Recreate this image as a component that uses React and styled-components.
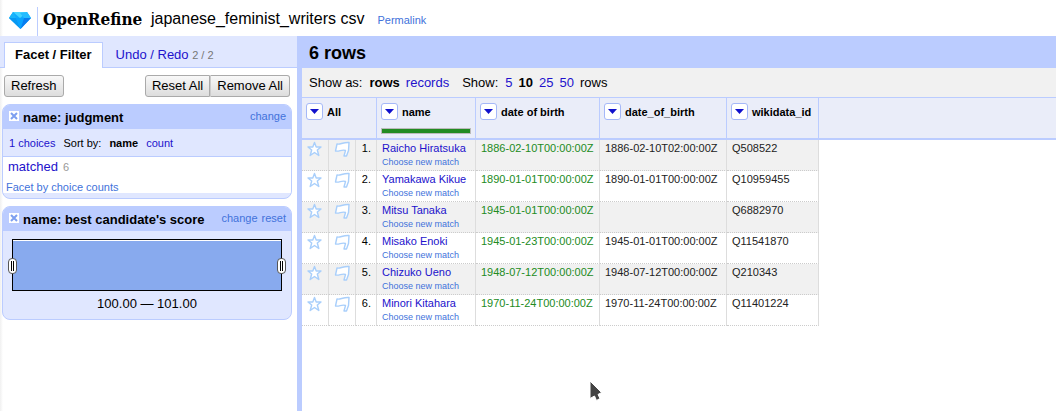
import React, { useState } from "react";
import styled, { createGlobalStyle, css } from "styled-components";

const c = {
  link: "#2211cc",
  action: "#4272db",
  band: "#bbccff",
  soft: "#e0e7ff",
  head: "#eaedf9",
  grey: "#f1f1f1",
  line: "#dddddd",
};

const Global = createGlobalStyle`
  *, *::before, *::after { box-sizing: border-box; }
  body { margin: 0; background: #fff; color: #000; font: 13px/16px "Liberation Sans", Arial, sans-serif; }
`;

const Page = styled.div`
  display: flex;
  flex-direction: column;
  min-height: 100vh;
  position: relative;
  background: linear-gradient(to right, #f0f0f0, #fff 3px);
`;

const Header = styled.header`
  display: flex;
  align-items: center;
  height: 36px;
  padding-left: 8px;
`;

const Logo = styled.a`
  display: flex;
  align-items: center;
  color: #000;
  text-decoration: none;
  svg { display: block; margin-top: 5px; }
`;

const Wordmark = styled.span`
  margin: 6px 6px 0 5px;
  padding-left: 5px;
  border-left: 1px solid #bbccff;
  height: 29px;
  width: 108px;
  white-space: nowrap;
  font: bold 17px/25px "DejaVu Serif Condensed", "DejaVu Serif", serif;
`;

const Project = styled.h1`
  margin: 2px 13px 0 0;
  font-size: 16px;
  line-height: 20px;
  font-weight: normal;
`;

const Link = styled.a`
  color: ${(p) => (p.$action ? c.action : c.link)};
  font-size: ${(p) => p.$size || 13}px;
  text-decoration: none;
`;

const Permalink = styled(Link)`
  margin-top: 4px;
`;

const Main = styled.div`
  display: flex;
  flex: 1;
`;

const Sidebar = styled.aside`
  flex: 0 0 297px;
`;

const Tabs = styled.nav`
  display: flex;
  align-items: flex-end;
  height: 32px;
  padding-left: 4px;
  background: ${c.soft};
  box-shadow: inset 0 -1px ${c.band};
`;

const Tab = styled.a`
  height: 26px;
  padding: 4px 10px 0;
  border: 1px solid transparent;
  border-bottom: 0;
  color: ${c.link};
  text-decoration: none;
  ${(p) =>
    p.$active &&
    css`
      margin-right: 2px;
      background: #fff;
      border-color: ${c.band};
      color: #000;
      font-weight: bold;
    `}
  small { font-size: 11px; color: #777; }
`;

const Toolbar = styled.div`
  display: flex;
  justify-content: space-between;
  padding: 7px 7px 7px 4px;
`;

const Group = styled.div`
  display: flex;
  button + button { border-radius: 0 3px 3px 0; border-left-color: #ccc; }
  button:first-child:not(:last-child) { border-radius: 3px 0 0 3px; }
`;

const Button = styled.button`
  height: 22px;
  padding: 0 6px;
  border: 1px solid #aaa;
  border-radius: 3px;
  background: linear-gradient(#f8f8f8, #ddd);
  color: #000;
  font: 13px/16px "Liberation Sans", Arial, sans-serif;
`;

const Facet = styled.section`
  margin: 0 5px 7px 2px;
  border: 1px solid ${c.band};
  border-radius: 8px;
  overflow: hidden;
  background: ${c.soft};
`;

const FacetHead = styled.div`
  display: flex;
  align-items: flex-start;
  gap: 4px;
  height: 24px;
  padding: 4px 5px 0 6px;
  background: ${c.band};
  h2 { flex: 1; margin: 0; padding-top: 1px; font-size: 13px; line-height: 16px; white-space: nowrap; }
  a { line-height: 15px; }
`;

const Close = styled.button`
  display: block;
  width: 10px;
  height: 10px;
  margin-top: 2px;
  padding: 0;
  border: 0;
  background: #fff;
  svg { display: block; }
`;

const FacetControls = styled.div`
  display: flex;
  gap: 8px;
  padding: 6px 6px 5px;
  border-bottom: 1px solid ${c.band};
  font-size: 11px;
`;

const Choices = styled.div`
  display: flex;
  flex-direction: column;
  gap: 4px;
  height: 36px;
  margin-bottom: 5px;
  padding: 2px 3px 0;
  background: #fff;
  div { padding-left: 2px; }
  small { margin-left: 5px; font-size: 11px; color: #999; }
`;

const Histogram = styled.div`
  position: relative;
  height: 52px;
  margin: 8px 9px 0;
  border: 1px solid #000;
  background: #88aaee;
  box-shadow: inset 0 1px #fff;
`;

const Range = styled.input`
  position: absolute;
  left: -5px;
  top: 18px;
  width: calc(100% + 10px);
  height: 16px;
  margin: 0;
  appearance: none;
  background: transparent;
  pointer-events: none;
  &::-webkit-slider-thumb {
    appearance: none;
    pointer-events: auto;
    width: 9px;
    height: 16px;
    border: 1px solid #555;
    border-radius: 4px;
    background:
      linear-gradient(#000, #000) 2px 2px / 1px 10px no-repeat,
      linear-gradient(#000, #000) 4px 2px / 1px 10px no-repeat,
      #fff;
  }
`;

const RangeText = styled.div`
  padding: 5px 0 7px;
  text-align: center;
`;

const Content = styled.main`
  flex: 1;
  min-width: 0;
  border-left: 5px solid ${c.band};
  background: #fff;
`;

const Summary = styled.h2`
  margin: 0;
  padding: 6px 7px;
  height: 32px;
  background: ${c.band};
  font-size: 18px;
  line-height: 22px;
`;

const ViewBar = styled.div`
  display: flex;
  gap: 13px;
  padding: 7px 7px 6px;
  background: ${c.grey};
`;

const Options = styled.div`
  display: flex;
  gap: 6px;
  span:first-child { margin-right: 1px; }
`;

const Table = styled.table`
  width: 100%;
  table-layout: fixed;
  border-collapse: separate;
  border-spacing: 0;
  font-size: 11px;
  line-height: 16px;
`;

const Th = styled.th`
  height: 43px;
  padding: 5px 4px 0;
  border: solid ${c.band};
  border-width: 1px ${(p) => (p.$last ? 0 : 1)}px 2px 0;
  background: ${c.head};
  text-align: left;
  vertical-align: top;
  white-space: nowrap;
`;

const HeadLabel = styled.div`
  display: flex;
  align-items: center;
  gap: 4px;
`;

const MenuButton = styled.button`
  display: flex;
  align-items: center;
  justify-content: center;
  width: 17px;
  height: 17px;
  padding: 0;
  border: 1px solid #a5b8f8;
  border-radius: 3px;
  background: #fff;
`;

const Recon = styled.div`
  height: 6px;
  margin-top: 8px;
  border: 1px solid #bbb;
  background: #228b22;
`;

const Td = styled.td`
  height: 31px;
  padding: 0 5px;
  border-right: 1px solid ${c.line};
  border-bottom: 1px dotted #ccc;
  background: ${(p) => (p.$odd ? c.grey : "#fff")};
  color: ${(p) => (p.$matched ? "#228b22" : "#222")};
  text-align: ${(p) => (p.$right ? "right" : "left")};
  vertical-align: top;
  white-space: nowrap;
`;

const Index = styled(Td)`
  color: #000;
`;

const IconCell = styled(Td)`
  svg { display: block; margin-top: 1px; }
`;

const Match = styled.div`
  font-size: 9px;
  line-height: 13px;
`;

const Pointer = styled.svg`
  position: absolute;
  left: 587px;
  top: 379px;
  pointer-events: none;
`;

const Diamond = () => (
  <svg width="24" height="19" viewBox="0 0 24 19">
    <path d="M5 1H19L23 7L12.500 18L1 7Z" fill="#10aaff" />
    <path d="M5 1H19L12 7Z" fill="#45d4ff" />
    <path d="M5 1L1 7H8Z" fill="#19b5fa" />
    <path d="M19 1L23 7H16L12 2Z" fill="#24bcff" />
    <path d="M1 7H8L12.500 18Z" fill="#0898f2" />
    <path d="M8 7H16L12.500 18Z" fill="#08a4ff" />
    <path d="M16 7H23L12.500 18Z" fill="#087df0" />
  </svg>
);

const Star = () => (
  <svg width="15" height="16" viewBox="0 0 15 16" fill="#fff" stroke="#a9cffb" strokeWidth="1.400" strokeLinejoin="round">
    <path d="M7.500 1.500L9.200 6H14L10.300 9L11.800 14.500L7.500 11.500L3.200 14.500L4.700 9L1 6H5.800Z" />
  </svg>
);

const Flag = () => (
  <svg width="17" height="16" viewBox="0 0 17 16" fill="#fff" stroke="#a9cffb" strokeWidth="1.400" strokeLinejoin="round">
    <path d="M3 3C6 4 9 1 15 1.500L14.500 9.500L12.500 15H10L11.500 9.500C8 8 5 11 1.500 10Z" />
  </svg>
);

const RemoveButton = () => (
  <Close aria-label="Remove this facet">
    <svg width="10" height="10" viewBox="0 0 10 10" stroke="#7d9ff0" strokeWidth="2">
      <path d="M2 2L8 8M8 2L2 8" />
    </svg>
  </Close>
);

function ColumnHead({ name, recon, span, last }) {
  return (
    <Th colSpan={span} $last={last}>
      <HeadLabel>
        <MenuButton aria-label={`${name} column menu`}>
          <svg width="9" height="5" viewBox="0 0 9 5"><path d="M0 0H9L4.500 5Z" fill="#1111cc" /></svg>
        </MenuButton>
        {name}
      </HeadLabel>
      {recon && <Recon />}
    </Th>
  );
}

const rows = [
  ["Raicho Hiratsuka", "1886-02-10T00:00:00Z", "1886-02-10T02:00:00Z", "Q508522"],
  ["Yamakawa Kikue", "1890-01-01T00:00:00Z", "1890-01-01T00:00:00Z", "Q10959455"],
  ["Mitsu Tanaka", "1945-01-01T00:00:00Z", "", "Q6882970"],
  ["Misako Enoki", "1945-01-23T00:00:00Z", "1945-01-01T00:00:00Z", "Q11541870"],
  ["Chizuko Ueno", "1948-07-12T00:00:00Z", "1948-07-12T00:00:00Z", "Q210343"],
  ["Minori Kitahara", "1970-11-24T00:00:00Z", "1970-11-24T00:00:00Z", "Q11401224"],
];

const columnWidths = [27, 27, 21, 99, 124, 127, 92];

export default function App() {
  const [from, setFrom] = useState(100);
  const [to, setTo] = useState(101);

  return (
    <>
      <Global />
      <Page>
        <Header>
          <Logo href="#">
            <Diamond />
            <Wordmark>OpenRefine</Wordmark>
          </Logo>
          <Project>japanese_feminist_writers csv</Project>
          <Permalink href="#" $action $size={11}>Permalink</Permalink>
        </Header>
        <Main>
          <Sidebar>
            <Tabs>
              <Tab href="#" $active>Facet / Filter</Tab>
              <Tab href="#">Undo / Redo <small>2 / 2</small></Tab>
            </Tabs>
            <Toolbar>
              <Button>Refresh</Button>
              <Group>
                <Button>Reset All</Button>
                <Button>Remove All</Button>
              </Group>
            </Toolbar>
            <Facet>
              <FacetHead>
                <RemoveButton />
                <h2>name: judgment</h2>
                <Link href="#" $action $size={11}>change</Link>
              </FacetHead>
              <FacetControls>
                <Link href="#" $size={11}>1 choices</Link>
                <span>Sort by:</span>
                <b>name</b>
                <Link href="#" $size={11}>count</Link>
              </FacetControls>
              <Choices>
                <div><Link href="#">matched</Link><small>6</small></div>
                <Link href="#" $action $size={11}>Facet by choice counts</Link>
              </Choices>
            </Facet>
            <Facet>
              <FacetHead>
                <RemoveButton />
                <h2>name: best candidate's score</h2>
                <Link href="#" $action $size={11}>change</Link>
                <Link href="#" $action $size={11}>reset</Link>
              </FacetHead>
              <Histogram>
                <Range type="range" aria-label="Lowest score" min="100" max="101" step="0.01" value={from} onChange={(e) => setFrom(Math.min(+e.target.value, to))} />
                <Range type="range" aria-label="Highest score" min="100" max="101" step="0.01" value={to} onChange={(e) => setTo(Math.max(+e.target.value, from))} />
              </Histogram>
              <RangeText>{from.toFixed(2)} — {to.toFixed(2)}</RangeText>
            </Facet>
          </Sidebar>
          <Content>
            <Summary>6 rows</Summary>
            <ViewBar>
              <Options>
                <span>Show as:</span>
                <b>rows</b>
                <Link href="#">records</Link>
              </Options>
              <Options>
                <span>Show:</span>
                <Link href="#">5</Link>
                <b>10</b>
                <Link href="#">25</Link>
                <Link href="#">50</Link>
                <span>rows</span>
              </Options>
            </ViewBar>
            <Table>
              <colgroup>
                {columnWidths.map((width, i) => <col key={i} style={{ width }} />)}
                <col />
              </colgroup>
              <thead>
                <tr>
                  <ColumnHead name="All" span={3} />
                  <ColumnHead name="name" recon />
                  <ColumnHead name="date of birth" />
                  <ColumnHead name="date_of_birth" />
                  <ColumnHead name="wikidata_id" />
                  <Th as="td" $last />
                </tr>
              </thead>
              <tbody>
                {rows.map(([name, born, date, id], i) => {
                  const odd = i % 2 === 0;
                  return (
                    <tr key={id}>
                      <IconCell $odd={odd}><Star /></IconCell>
                      <IconCell $odd={odd}><Flag /></IconCell>
                      <Index $odd={odd} $right>{i + 1}.</Index>
                      <Td $odd={odd}>
                        <Link href="#" $size={11}>{name}</Link>
                        <Match><Link href="#" $action $size={9}>Choose new match</Link></Match>
                      </Td>
                      <Td $odd={odd} $matched>{born}</Td>
                      <Td $odd={odd}>{date}</Td>
                      <Td $odd={odd}>{id}</Td>
                    </tr>
                  );
                })}
              </tbody>
            </Table>
          </Content>
        </Main>
        <Pointer width="18" height="26" viewBox="0 0 18 26" aria-hidden="true">
          <path d="M3 2L14.500 13.500L11 15.500L13 19.500L9.500 21.500L7.500 17L3 19.500Z" fill="#444" stroke="#fff" strokeWidth="1" />
        </Pointer>
      </Page>
    </>
  );
}
